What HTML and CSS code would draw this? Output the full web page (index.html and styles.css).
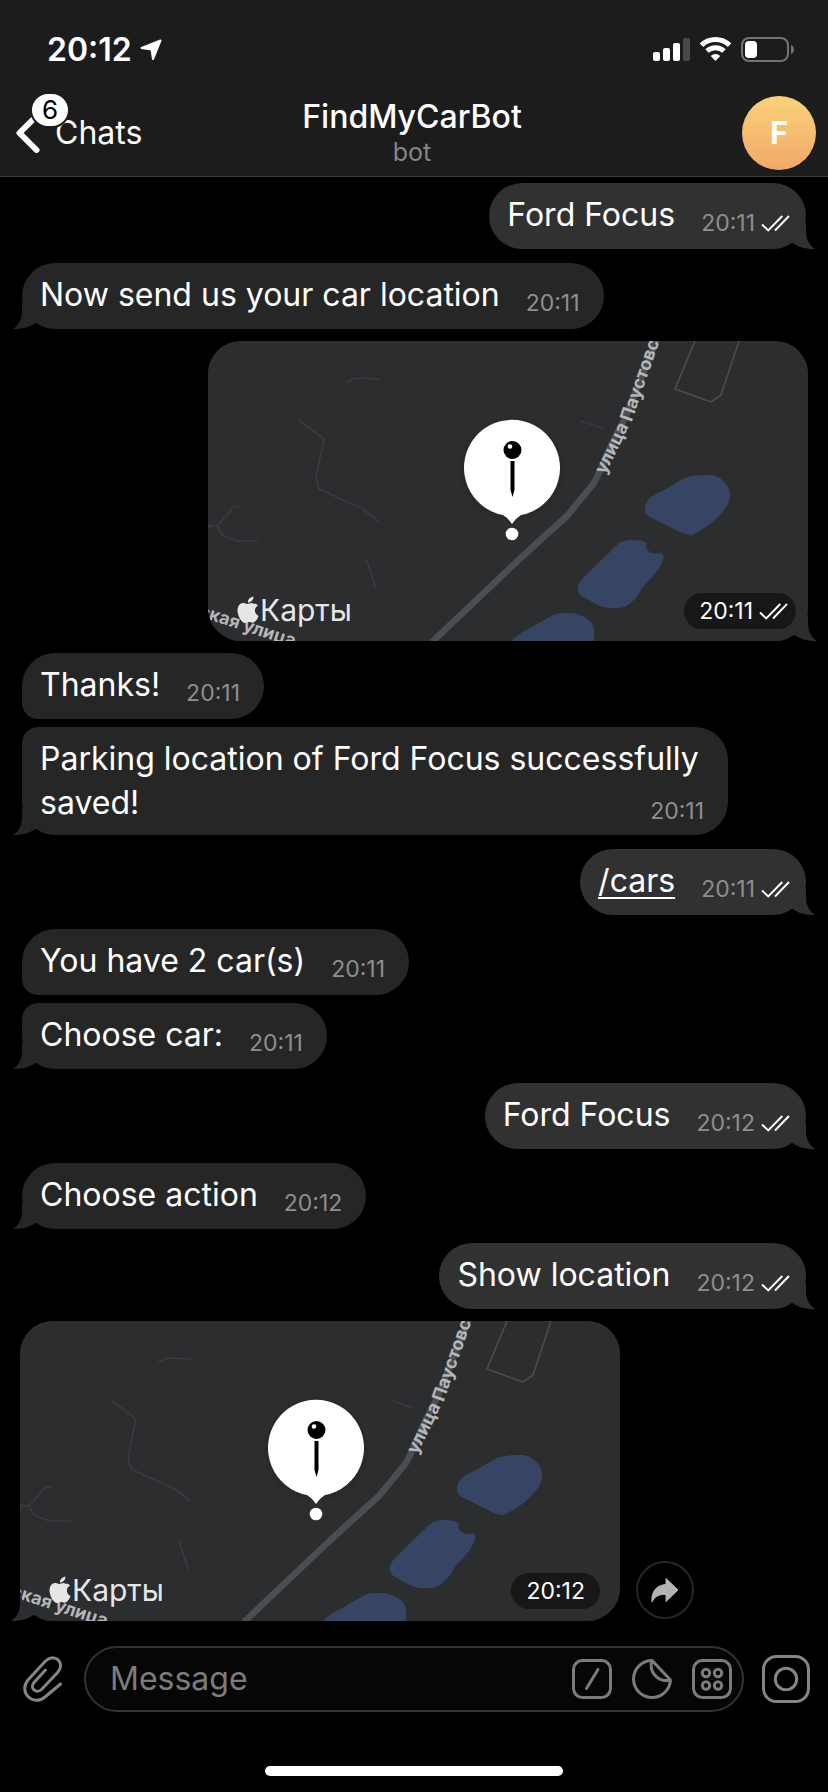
FILE: index.html
```html
<!DOCTYPE html>
<html lang="en">
<head>
<meta charset="utf-8">
<meta name="viewport" content="width=device-width, initial-scale=1">
<title>FindMyCarBot</title>
<link rel="stylesheet" href="styles.css">
</head>
<body>
<svg class="sprites" aria-hidden="true">
  <symbol id="tail-in" viewBox="0 0 40 30"><path d="M10 4V12C10 20 7 26 1 30C10 30 17 28.500 23.500 24L38 4Z" fill="currentColor"/></symbol>
  <symbol id="tail-out" viewBox="0 0 40 30"><path d="M30 4V12C30 20 33 26 39 30C30 30 23 28.500 16.500 24L2 4Z" fill="currentColor"/></symbol>
  <symbol id="checks" viewBox="0 0 29 17"><path d="M1 9.500L7.200 15.500L21.300 1M14 15.500L28 1" fill="none" stroke="#fff" stroke-width="1.900"/></symbol>
  <symbol id="map" viewBox="0 0 600 300" preserveAspectRatio="xMidYMid slice">
    <rect width="600" height="300" fill="#2c2d2f"/>
    <g fill="none" stroke="#3a3b3f" stroke-width="1.700" stroke-linejoin="round" stroke-linecap="round">
      <path d="M139 41L147 37L171 38M91 79L116 98L108 136L111 148L155 168L170 180M0 184L9 185L26 166H31M9 185L14 194L29 200H50M0 188L3 184M159 220L168 248M373 80L394 87"/>
      <path d="M487 0L467 48L503 61L513 54L531 0" stroke="#494b4d"/>
    </g>
    <path d="M224 301L302 227L329 202L359 175L386 142L392 130Q402 105 417 77L449 -2" fill="none" stroke="#4b4e50" stroke-width="6.500" stroke-linejoin="round"/>
    <g fill="#374464">
      <path d="M437 169C436 160 445 154 452 151C462 146 469 141 477 137C484 134 497 134 504 134C514 136 522 145 522 153C522 164 516 169 512 174C506 181 496 188 484 194C480 194 475 193 472 191L444 177C440 175 437 173 437 169Z"/>
      <path d="M370 250C368 244 374 238 380 232L409 204C415 199 420 199 425 199C430 199 435 200 439 202C436 209 444 215 453 212C456 214 456 217 454 221C451 229 444 236 434 247C431 254 424 263 416 266C409 268 397 268 390 264C380 258 372 256 370 250Z"/>
      <path d="M302 301C307 296 315 290 322 287L343 275C350 271 362 272 369 273C376 275 384 280 385 285C387 290 386 296 386 301Z"/>
    </g>
    <path id="street-curve" d="M397 134L425 77L453 -4L467 -50" fill="none"/>
    <g class="street">
      <text><textPath href="#street-curve">улица Паустовского</textPath></text>
      <text x="-10" y="275" transform="rotate(18 -10 275)">ская улица</text>
    </g>
    <g fill="#e6e6e8">
      <path d="M46 263C43 260.500 40 264 37.500 262.500C32 260.500 29.500 265 29.500 270C30 276 34 282 37 282C39 282 39.500 280.500 42 281C44 282 45 282 46.500 281C48.500 279.500 50 277 50.500 275C45.500 272.500 46 266.500 50 264.500C48.500 262.500 47 262.500 46 263ZM40 261.500C39.500 258.500 42.500 256 45.500 255.500C45.500 259 43 261.500 40 261.500Z"/>
      <text class="brand" x="52" y="280">Карты</text>
    </g>
  </symbol>
  <symbol id="pin" viewBox="0 0 120 140">
    <circle cx="60" cy="59" r="52" fill="#000" opacity=".05"/>
    <path d="M51 105A48 48 0 1 1 69 105Q64 108 60 114Q56 108 51 105Z" fill="#fff"/>
    <circle cx="60" cy="124" r="6.300" fill="#fff"/>
    <circle cx="60.500" cy="40" r="9" fill="#000"/><circle cx="58" cy="36.500" r="2.300" fill="#fff"/>
    <path d="M58.500 51H62.500V80L60.500 87L58.500 80Z" fill="#000"/>
  </symbol>
</svg>

<header class="header">
  <div class="status">
    <div class="clock"><span>20:12</span>
      <svg width="22" height="22" viewBox="0 0 22 22"><path d="M20.500 1.500L13 20L11.500 10.500L1.500 9Z" fill="#fff" stroke="#fff" stroke-width="2" stroke-linejoin="round"/></svg>
    </div>
    <svg width="142" height="26" viewBox="0 0 142 26">
      <rect x="0" y="15" width="7" height="9" rx="2" fill="#fff"/><rect x="10" y="11" width="7" height="13" rx="2" fill="#fff"/><rect x="20" y="6" width="7" height="18" rx="2" fill="#fff"/><rect x="30" y="1" width="7" height="23" rx="2" fill="#4a4a4a"/>
      <g fill="none" stroke="#fff" stroke-width="5"><path d="M48.500 8.300A20 20 0 0 1 76.500 8.300"/><path d="M54 14A12.500 12.500 0 0 1 71 14"/></g>
      <path d="M62.500 24L57.700 19A7 7 0 0 1 67.300 19Z" fill="#fff"/>
      <rect x="89" y="1" width="46" height="23" rx="7" fill="none" stroke="#737373" stroke-width="2"/><rect x="92" y="4" width="12" height="17" rx="4" fill="#fff"/><path d="M138 8Q141 9.500 141 12.500Q141 15.500 138 17Z" fill="#737373"/>
    </svg>
  </div>
  <nav class="nav">
    <button class="back" type="button">
      <svg width="32" height="40" viewBox="0 0 32 40"><path d="M28 3.500L11.500 20L28.500 37" fill="none" stroke="#fff" stroke-width="6" stroke-linecap="round" stroke-linejoin="round"/></svg>
      <span>Chats</span><span class="badge">6</span>
    </button>
    <div class="peer"><h1 class="title">FindMyCarBot</h1><p class="subtitle">bot</p></div>
    <button class="avatar" type="button" aria-label="Profile">F</button>
  </nav>
</header>

<main class="chat">
  <div class="msg out"><p class="text">Ford Focus</p><span class="meta">20:11<svg class="checks"><use href="#checks"/></svg></span><svg class="tail"><use href="#tail-out"/></svg></div>
  <div class="msg in"><p class="text">Now send us your car location</p><span class="meta">20:11</span><svg class="tail"><use href="#tail-in"/></svg></div>
  <div class="place out">
    <svg class="map" role="img" aria-label="Car location"><use href="#map"/></svg>
    <svg class="pin"><use href="#pin"/></svg>
    <span class="stamp">20:11<svg class="checks"><use href="#checks"/></svg></span>
    <svg class="tail"><use href="#tail-out"/></svg>
  </div>
  <div class="msg in first"><p class="text">Thanks!</p><span class="meta">20:11</span></div>
  <div class="msg in last long"><p class="text">Parking location of Ford Focus successfully saved!</p><span class="meta">20:11</span><svg class="tail"><use href="#tail-in"/></svg></div>
  <div class="msg out"><p class="text"><a class="command" href="#cars">/cars</a></p><span class="meta">20:11<svg class="checks"><use href="#checks"/></svg></span><svg class="tail"><use href="#tail-out"/></svg></div>
  <div class="msg in first"><p class="text">You have 2 car(s)</p><span class="meta">20:11</span></div>
  <div class="msg in last"><p class="text">Choose car:</p><span class="meta">20:11</span><svg class="tail"><use href="#tail-in"/></svg></div>
  <div class="msg out"><p class="text">Ford Focus</p><span class="meta">20:12<svg class="checks"><use href="#checks"/></svg></span><svg class="tail"><use href="#tail-out"/></svg></div>
  <div class="msg in"><p class="text">Choose action</p><span class="meta">20:12</span><svg class="tail"><use href="#tail-in"/></svg></div>
  <div class="msg out"><p class="text">Show location</p><span class="meta">20:12<svg class="checks"><use href="#checks"/></svg></span><svg class="tail"><use href="#tail-out"/></svg></div>
  <div class="row">
    <div class="place in">
      <svg class="map" role="img" aria-label="Car location"><use href="#map"/></svg>
      <svg class="pin"><use href="#pin"/></svg>
      <span class="stamp">20:12</span>
      <svg class="tail"><use href="#tail-in"/></svg>
    </div>
    <button class="share" type="button" aria-label="Share">
      <svg width="28" height="26" viewBox="0 0 28 26"><path d="M15 1.500L27 13L15 24.500V17.500C8 17 3.500 19.500 1 25C0 14 6 8 15 7.500Z" fill="#b4b4b4" stroke="#b4b4b4" stroke-linejoin="round"/></svg>
    </button>
  </div>
</main>

<footer class="footer">
  <form class="composer">
    <button class="tool" type="button" aria-label="Attach">
      <svg width="44" height="48" viewBox="0 0 44 48"><path d="M23.500 15L12 27.500C7.500 33 14 39.500 19.500 34.500L36 17C43.500 8.500 33 -3 23.500 6L6 25C-4 37 11 52 23 42L38.500 29" fill="none" stroke="#858585" stroke-width="3" stroke-linecap="round" stroke-linejoin="round"/></svg>
    </button>
    <div class="field">
      <input class="input" type="text" placeholder="Message" aria-label="Message">
      <button class="tool" type="button" aria-label="Commands"><svg width="40" height="40" viewBox="0 0 40 40" fill="none" stroke="#7c7c7c" stroke-width="3" stroke-linecap="round"><rect x="1.500" y="1.500" width="37" height="37" rx="9"/><path d="M26 10.500L14.500 29.500"/></svg></button>
      <button class="tool" type="button" aria-label="Stickers"><svg width="40" height="40" viewBox="0 0 40 40" fill="none" stroke="#7c7c7c" stroke-width="3" stroke-linejoin="round"><path d="M20 1.500A18.500 18.500 0 1 0 38.500 21Z"/><path d="M20 1.500C16.500 12 25 24 38.500 21"/></svg></button>
      <button class="tool" type="button" aria-label="Keyboard"><svg width="40" height="40" viewBox="0 0 40 40" fill="none" stroke="#7c7c7c" stroke-width="3"><rect x="1.500" y="1.500" width="37" height="37" rx="9"/><circle cx="14" cy="14" r="3.700"/><circle cx="26" cy="14" r="3.700"/><circle cx="14" cy="26.500" r="3.700"/><circle cx="26" cy="26.500" r="3.700"/></svg></button>
    </div>
    <button class="tool" type="button" aria-label="Record video"><svg width="48" height="48" viewBox="0 0 48 48" fill="none" stroke="#858585" stroke-width="3"><rect x="1.500" y="1.500" width="45" height="45" rx="13"/><circle cx="24" cy="24" r="10.700"/></svg></button>
  </form>
  <div class="home"></div>
</footer>
</body>
</html>
```
FILE: styles.css
```css
* { box-sizing: border-box; }

body {
  margin: 0;
  min-height: 100vh;
  display: flex;
  flex-direction: column;
  background: #000;
  color: #fff;
  font-family: Inter, "Liberation Sans", sans-serif;
  font-size: 32px;
  line-height: 44px;
}

button {
  margin: 0;
  padding: 0;
  border: 0;
  background: none;
  color: inherit;
  font: inherit;
}

svg { display: block; flex: none; }
p, h1 { margin: 0; }

.sprites { position: absolute; width: 0; height: 0; }

.header { background: #1c1c1c; border-bottom: 1px solid #3d3d3d; }

.status {
  display: flex;
  justify-content: space-between;
  align-items: center;
  padding: 28px 33px 0 47px;
}

.clock { display: flex; align-items: center; gap: 8px; font-weight: 600; }

.nav {
  display: grid;
  grid-template-columns: 1fr auto 1fr;
  align-items: center;
  padding: 24px 12px 6px 8px;
}

.back {
  position: relative;
  justify-self: start;
  display: flex;
  align-items: center;
  gap: 15px;
}

.badge {
  position: absolute;
  left: 22px;
  top: -19px;
  min-width: 40px;
  height: 36px;
  border: 2px solid #1c1c1c;
  border-radius: 18px;
  background: #fff;
  color: #000;
  font-size: 26px;
  line-height: 32px;
}

.peer { text-align: center; }
.title { font-size: 32px; font-weight: 500; line-height: 38px; }
.subtitle { color: #858585; font-size: 25px; line-height: 32px; }

.avatar {
  justify-self: end;
  width: 74px;
  height: 74px;
  border-radius: 50%;
  background: linear-gradient(#f9d27b, #f2a868);
  font-size: 31px;
  font-weight: 700;
}

.chat {
  flex: 1;
  display: flex;
  flex-direction: column;
  align-items: flex-start;
  padding: 6px 22px 24px;
}

.msg {
  position: relative;
  display: flex;
  align-items: flex-end;
  gap: 26px;
  margin-bottom: 14px;
  padding: 10px 24px 12px 18px;
  border-radius: 33px;
}

.in { background: #262626; color: #262626; }
.out { align-self: flex-end; background: #313131; color: #313131; }
.msg.out { padding-right: 16px; }
.msg.first { margin-bottom: 8px; border-bottom-left-radius: 16px; }
.msg.last { border-top-left-radius: 16px; }
.text { color: #fff; }
.command { color: inherit; text-decoration-thickness: 2px; text-underline-offset: 5px; }

.meta {
  display: flex;
  align-items: center;
  gap: 6px;
  color: #8e8e8e;
  font-size: 23px;
  line-height: 28px;
}

.msg.long { display: grid; max-width: 706px; padding-bottom: 10px; }
.long .text, .long .meta { grid-area: 1 / 1; }
.long .meta { justify-self: end; }

.checks { width: 29px; height: 17px; }

.tail { position: absolute; z-index: -1; bottom: 0; width: 40px; height: 30px; }
.in .tail { left: -10px; }
.out .tail { right: -10px; }

.place {
  position: relative;
  flex: 0 1 600px;
  width: 100%;
  max-width: 600px;
  margin: -2px -2px 12px;
  border-radius: 33px;
}

.chat .place { background: #2c2d2f; color: #2c2d2f; }
.chat > .place { flex: none; }
.map { width: 100%; height: 300px; border-radius: 33px; }
.pin { position: absolute; left: calc(50% - 64px); top: 69px; width: 120px; height: 140px; }
.place.out .pin { left: calc(50% - 56px); }

.street { fill: #b4b6b9; font-size: 18px; font-weight: 700; }
.brand { font-size: 30px; }

.chat .stamp {
  position: absolute;
  right: 20px;
  bottom: 12px;
  display: flex;
  align-items: center;
  gap: 6px;
  padding: 0 15px;
  border-radius: 18px;
  background: #171717;
  color: #fff;
  font-size: 23px;
  line-height: 36px;
}

.chat .out .stamp { right: 12px; padding-right: 8px; }

.row { display: flex; align-items: flex-end; gap: 18px; width: 100%; }
.row .place { margin-bottom: 0; }

.share {
  display: grid;
  place-items: center;
  width: 58px;
  height: 58px;
  margin-bottom: 2px;
  border: 2px solid #262626;
  border-radius: 50%;
}

.composer { display: flex; align-items: center; gap: 18px; padding: 0 18px 0 22px; }

.field {
  flex: 1;
  min-width: 0;
  display: flex;
  align-items: center;
  gap: 20px;
  height: 66px;
  padding: 0 10px 0 24px;
  border: 2px solid #333;
  border-radius: 33px;
  background: #060606;
}

.input {
  flex: 1;
  min-width: 0;
  padding: 0;
  border: 0;
  outline: 0;
  background: none;
  color: #fff;
  font: inherit;
}

.input::placeholder { color: #7c7c7c; opacity: 1; }

.home {
  width: 36%;
  height: 10px;
  margin: 54px auto 16px;
  border-radius: 5px;
  background: #fff;
}
```
